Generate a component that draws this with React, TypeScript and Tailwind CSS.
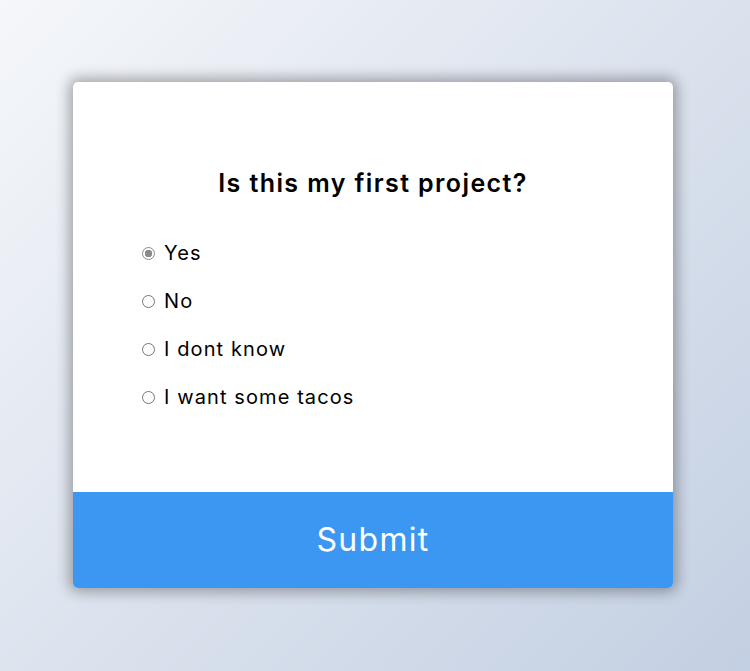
import { useState } from 'react'

const options = ['Yes', 'No', 'I dont know', 'I want some tacos']

export default function App() {
  const [picked, setPicked] = useState('Yes')

  return (
    <div
      className="min-h-screen w-full bg-[linear-gradient(135deg,#f5f7fa_0%,#c3cfe2_100%)] flex items-start pt-[82px] pl-[73px]"
      style={{ fontFamily: 'Inter, "Open Sans", sans-serif' }}
    >
      <div className="w-[600px] bg-white rounded-[5px] overflow-hidden shadow-[0_0_14px_4px_rgba(0,0,0,0.32)]">
        <div className="pt-[86px] pb-[83px] px-[69px]">
          <h2 className="text-center text-[25px] font-semibold text-black leading-[30px] tracking-[1.4px]">
            Is this my first project?
          </h2>
          <ul className="mt-[43px] flex flex-col gap-[24px]">
            {options.map((opt) => (
              <li key={opt}>
                <label className="flex items-center gap-[9px] h-[24px] cursor-pointer">
                  <input
                    type="radio"
                    name="answer"
                    checked={picked === opt}
                    onChange={() => setPicked(opt)}
                    className="appearance-none w-[13px] h-[13px] rounded-full border border-[#767676] bg-white checked:border-[#8a8a8a] checked:bg-[radial-gradient(circle,#8a8a8a_0_3.5px,#fff_4px)] m-0"
                  />
                  <span className="text-[20px] text-black tracking-[1.1px]">{opt}</span>
                </label>
              </li>
            ))}
          </ul>
        </div>
        <button className="w-full h-[96px] bg-[#3c97f2] text-white text-[32px] tracking-[1.3px]">
          Submit
        </button>
      </div>
    </div>
  )
}
